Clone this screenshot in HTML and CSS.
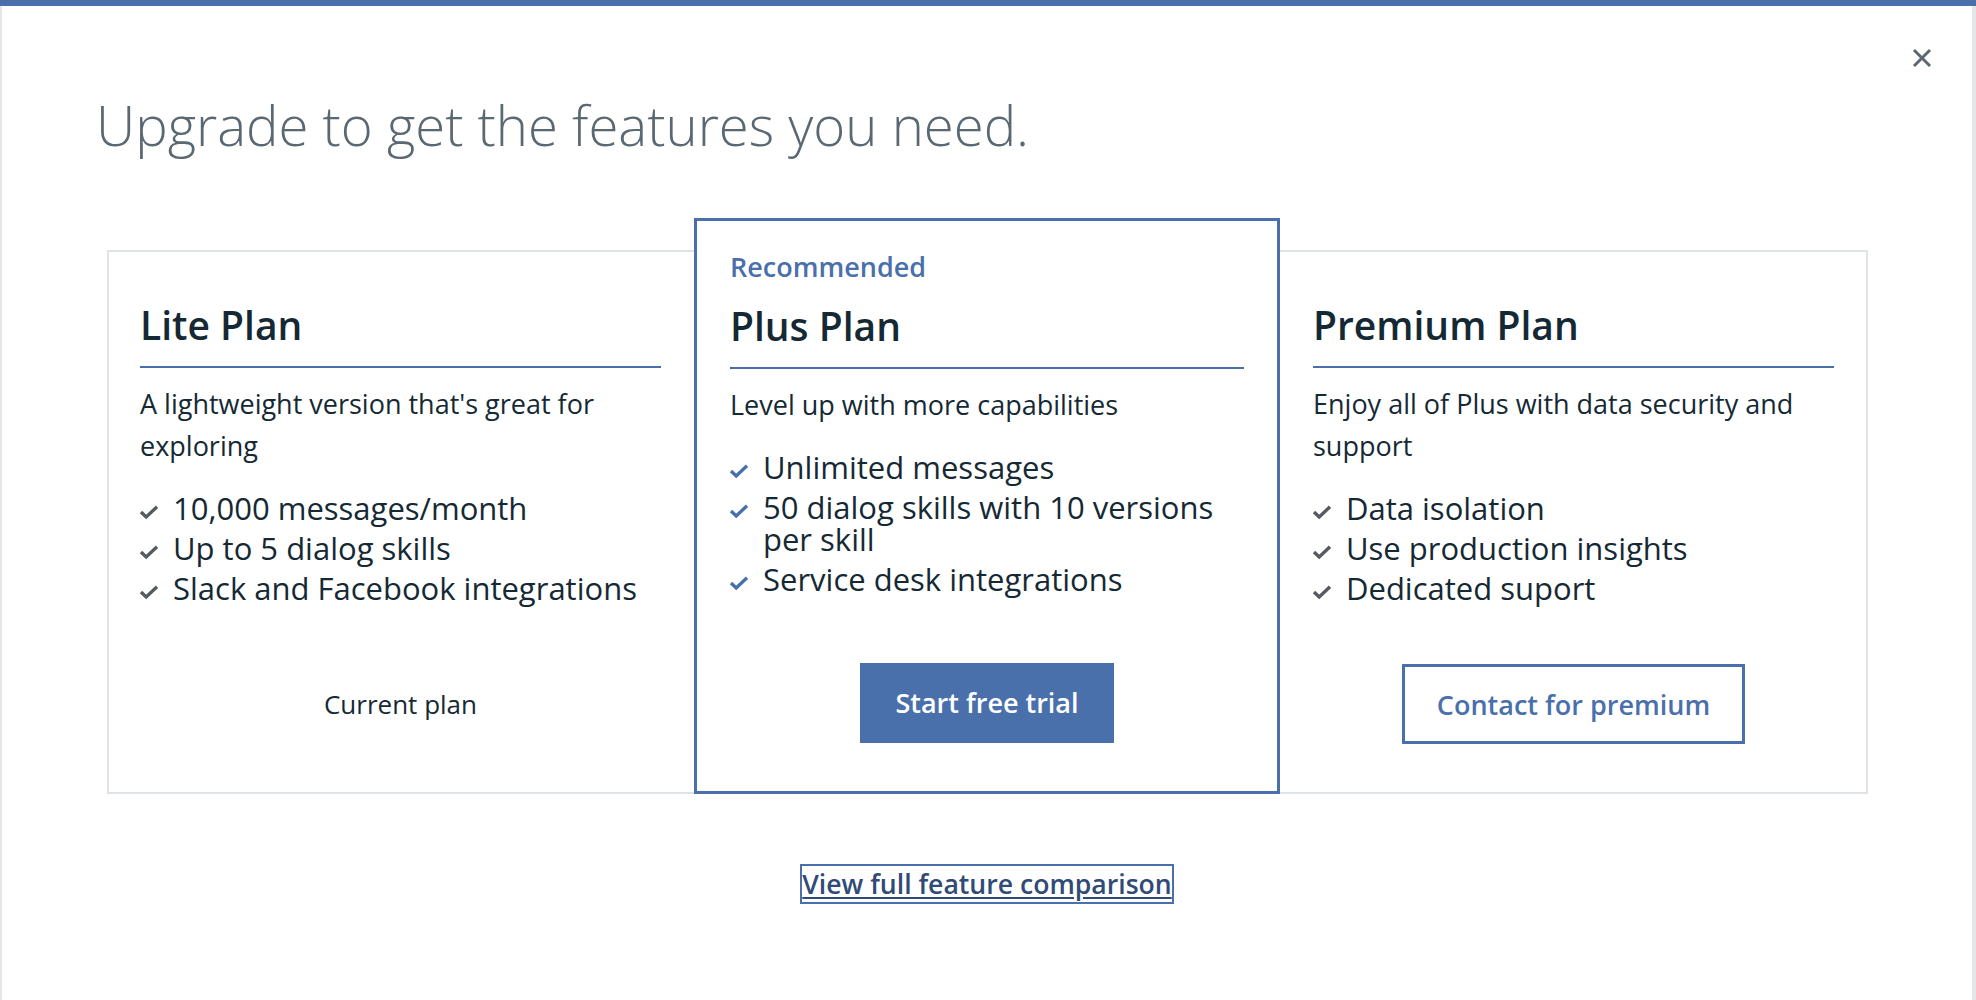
FILE: index.html
```
<!DOCTYPE html>
<html lang="en">
<head>
<meta charset="utf-8">
<title>Upgrade</title>
<link rel="stylesheet" href="styles.css">
</head>
<body>
<div class="topbar"></div>
<div class="modal">
  <button class="close" aria-label="Close">
    <svg viewBox="0 0 20 20" width="20" height="20"><path d="M2 2 L18 18 M18 2 L2 18" stroke="#5a6872" stroke-width="3" fill="none"/></svg>
  </button>
  <h1 class="title">Upgrade to get the features you need.</h1>
  <div class="plans">
    <section class="plan plan-lite">
      <h2 class="plan-name">Lite Plan</h2>
      <p class="plan-desc">A lightweight version that's great for exploring</p>
      <ul class="features">
        <li class="feature"><svg class="check" viewBox="0 0 20 16" width="20" height="16"><polyline points="2,8 7.2,13 18,2.8" fill="none" stroke-width="3.4"/></svg><span>10,000 messages/month</span></li>
        <li class="feature"><svg class="check" viewBox="0 0 20 16" width="20" height="16"><polyline points="2,8 7.2,13 18,2.8" fill="none" stroke-width="3.4"/></svg><span>Up to 5 dialog skills</span></li>
        <li class="feature"><svg class="check" viewBox="0 0 20 16" width="20" height="16"><polyline points="2,8 7.2,13 18,2.8" fill="none" stroke-width="3.4"/></svg><span>Slack and Facebook integrations</span></li>
      </ul>
      <div class="plan-footer"><span class="current">Current plan</span></div>
    </section>
    <section class="plan plan-plus">
      <div class="recommended">Recommended</div>
      <h2 class="plan-name plan-name-plus">Plus Plan</h2>
      <p class="plan-desc">Level up with more capabilities</p>
      <ul class="features">
        <li class="feature"><svg class="check" viewBox="0 0 20 16" width="20" height="16"><polyline points="2,8 7.2,13 18,2.8" fill="none" stroke-width="3.4"/></svg><span>Unlimited messages</span></li>
        <li class="feature"><svg class="check" viewBox="0 0 20 16" width="20" height="16"><polyline points="2,8 7.2,13 18,2.8" fill="none" stroke-width="3.4"/></svg><span>50 dialog skills with 10 versions per skill</span></li>
        <li class="feature"><svg class="check" viewBox="0 0 20 16" width="20" height="16"><polyline points="2,8 7.2,13 18,2.8" fill="none" stroke-width="3.4"/></svg><span>Service desk integrations</span></li>
      </ul>
      <div class="plan-footer plan-footer-plus"><button class="btn btn-primary">Start free trial</button></div>
    </section>
    <section class="plan plan-premium">
      <h2 class="plan-name">Premium Plan</h2>
      <p class="plan-desc">Enjoy all of Plus with data security and support</p>
      <ul class="features">
        <li class="feature"><svg class="check" viewBox="0 0 20 16" width="20" height="16"><polyline points="2,8 7.2,13 18,2.8" fill="none" stroke-width="3.4"/></svg><span>Data isolation</span></li>
        <li class="feature"><svg class="check" viewBox="0 0 20 16" width="20" height="16"><polyline points="2,8 7.2,13 18,2.8" fill="none" stroke-width="3.4"/></svg><span>Use production insights</span></li>
        <li class="feature"><svg class="check" viewBox="0 0 20 16" width="20" height="16"><polyline points="2,8 7.2,13 18,2.8" fill="none" stroke-width="3.4"/></svg><span>Dedicated suport</span></li>
      </ul>
      <div class="plan-footer"><button class="btn btn-secondary">Contact for premium</button></div>
    </section>
  </div>
  <div class="compare"><a class="compare-link" href="#">View full feature comparison</a></div>
</div>
</body>
</html>
```

FILE: styles.css
```
* { box-sizing: border-box; }
html, body { margin: 0; padding: 0; }
body {
  background: #e4e6e8;
  font-family: "Open Sans", "Noto Sans", sans-serif;
  color: #152935;
  width: 1976px;
  height: 1000px;
  overflow: hidden;
}
.topbar {
  height: 6px;
  background: #4a70ac;
}
.modal {
  position: relative;
  margin-left: 2px;
  width: 1970px;
  height: 994px;
  background: #ffffff;
  padding-top: 88px;
}
.close {
  position: absolute;
  top: 42px;
  left: 1910px;
  width: 20px;
  height: 20px;
  padding: 0;
  border: 0;
  background: none;
  display: flex;
}
.title {
  margin: 0 0 0 94px;
  font-size: 54.5px;
  line-height: 62px;
  font-weight: 300;
  color: #5a6872;
  letter-spacing: 0;
}
.plans {
  display: flex;
  height: 576px;
  margin: 62px 0 0 105px;
}
.plan {
  display: flex;
  flex-direction: column;
  background: #fff;
}
.plan-lite {
  width: 587px;
  margin-top: 32px;
  border: 2px solid #dfe3e6;
  border-right: 0;
  padding: 49px 33px 0 31px;
}
.plan-plus {
  width: 586px;
  border: 3px solid #4a70ac;
  padding: 30px 33px 0 33px;
  position: relative;
  z-index: 1;
}
.plan-premium {
  width: 588px;
  margin-top: 32px;
  border: 2px solid #dfe3e6;
  border-left: 0;
  padding: 49px 32px 0 33px;
}
.recommended {
  font-size: 27px;
  line-height: 32px;
  font-weight: 600;
  color: #4a70ac;
}
.plan-name {
  margin: 0;
  font-size: 39px;
  line-height: 48px;
  font-weight: 600;
  color: #152935;
  padding-bottom: 17px;
  border-bottom: 2px solid #4a70ac;
}
.plan-name-plus {
  margin-top: 19px;
}
.plan-desc {
  margin: 15px 0 0;
  font-size: 27px;
  line-height: 42px;
  font-weight: 400;
  color: #152935;
}
.features {
  list-style: none;
  margin: 25px 0 0;
  padding: 0;
  display: flex;
  flex-direction: column;
  gap: 8px;
}
.feature {
  display: flex;
  align-items: flex-start;
  gap: 14px;
  font-size: 31px;
  line-height: 32px;
  color: #152935;
}
.check {
  flex: none;
  margin-top: 12px;
  margin-left: -1px;
  stroke: #555b61;
}
.plan-plus .check { stroke: #4a70ac; }
.plan-footer {
  margin-top: auto;
  padding-bottom: 48px;
  display: flex;
  justify-content: center;
  align-items: center;
  height: 128px;
}
.plan-footer-plus {
  padding-bottom: 49px;
}
.current {
  font-size: 26px;
  line-height: 80px;
  color: #152935;
}
.btn {
  height: 80px;
  padding: 0 35px;
  font-family: "Open Sans", "Noto Sans", sans-serif;
  font-size: 27px;
  font-weight: 600;
  border: 0;
}
.btn-primary {
  background: #4a70ac;
  color: #ffffff;
}
.btn-secondary {
  background: #fff;
  color: #4a70ac;
  border: 3px solid #4a70ac;
  padding: 0 32px;
}
.compare {
  display: flex;
  justify-content: center;
  margin-top: 70px;
}
.compare-link {
  display: inline-block;
  border: 2px solid #4a70ac;
  padding: 0;
  font-size: 26.6px;
  line-height: 36px;
  font-weight: 600;
  color: #2f4b76;
  text-decoration: underline;
  text-underline-offset: 3px;
}
```
